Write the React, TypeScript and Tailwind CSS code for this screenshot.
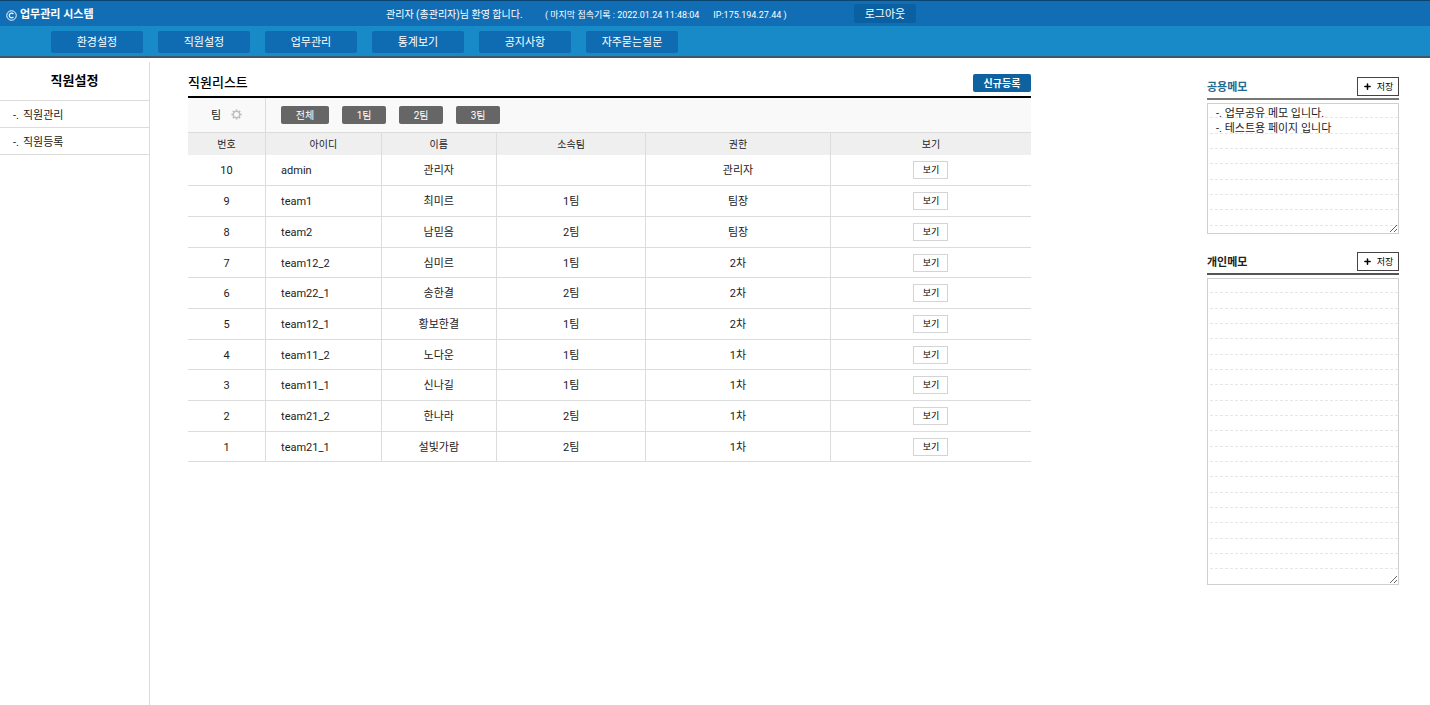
import { Plus } from "lucide-react";
import { useState } from "react";

const MENU = ["환경설정", "직원설정", "업무관리", "통계보기", "공지사항", "자주묻는질문"];
const SIDE_MENU = ["직원관리", "직원등록"];
const TEAMS = ["1팀", "2팀", "3팀"];

interface Staff {
  no: number;
  id: string;
  name: string;
  team: string;
  role: string;
}

const STAFF: Staff[] = [
  { no: 10, id: "admin", name: "관리자", team: "", role: "관리자" },
  { no: 9, id: "team1", name: "최미르", team: "1팀", role: "팀장" },
  { no: 8, id: "team2", name: "남믿음", team: "2팀", role: "팀장" },
  { no: 7, id: "team12_2", name: "심미르", team: "1팀", role: "2차" },
  { no: 6, id: "team22_1", name: "송한결", team: "2팀", role: "2차" },
  { no: 5, id: "team12_1", name: "황보한결", team: "1팀", role: "2차" },
  { no: 4, id: "team11_2", name: "노다운", team: "1팀", role: "1차" },
  { no: 3, id: "team11_1", name: "신나길", team: "1팀", role: "1차" },
  { no: 2, id: "team21_2", name: "한나라", team: "2팀", role: "1차" },
  { no: 1, id: "team21_1", name: "설빛가람", team: "2팀", role: "1차" },
];

function CopyrightIcon() {
  return (
    <svg viewBox="0 0 22 22" className="size-[11px]" fill="none" stroke="currentColor" strokeWidth="2">
      <circle cx="11" cy="11" r="9.5" />
      <path d="M14.8 8.2A4.6 4.6 0 1 0 14.8 13.8" strokeWidth="2.4" />
    </svg>
  );
}

function GearIcon() {
  return (
    <svg viewBox="0 0 24 24" className="size-[11px] text-[#bdbdbd]" fill="none" stroke="currentColor">
      <circle cx="12" cy="12" r="6.8" strokeWidth="2.6" />
      <path
        d="M12 1v4M12 19v4M1 12h4M19 12h4M4.2 4.2l2.9 2.9M16.9 16.9l2.9 2.9M4.2 19.8l2.9-2.9M16.9 7.1l2.9-2.9"
        strokeWidth="4"
      />
    </svg>
  );
}

function Header() {
  return (
    <header className="border-b-2 border-[#3c566b] text-white">
      <div className="flex h-[26px] items-center border-t border-[#0a4471] bg-[#116db4]">
        <h1 className="ml-[6px] flex w-[380px] shrink-0 items-center gap-[3px] pt-[3px] text-[11px] font-bold">
          <CopyrightIcon />
          업무관리 시스템
        </h1>
        <p className="w-[159px] shrink-0 pt-[2px] text-[10px]">관리자 (총관리자)님 환영 합니다.</p>
        <p className="flex w-[309px] shrink-0 gap-[14px] pt-[2px] text-[9px] whitespace-nowrap">
          <span>( 마지막 접속기록 : 2022.01.24 11:48:04</span>
          <span>IP:175.194.27.44 )</span>
        </p>
        <button className="h-[19px] w-[62px] rounded-xs bg-[#0b60a2] pt-[2px] text-[11px]">로그아웃</button>
      </div>
      <nav className="flex h-[30px] items-end gap-[15px] bg-[#188ac8] pb-[3px] pl-[51px]">
        {MENU.map((m) => (
          <a
            key={m}
            href="#"
            className="flex h-[22px] w-[92px] items-center justify-center rounded-xs bg-[#0f6cb3] pt-[2px] text-[11px]"
          >
            {m}
          </a>
        ))}
      </nav>
    </header>
  );
}

function Sidebar() {
  return (
    <aside className="mt-1 w-[150px] shrink-0 border-r border-[#dcdcdc]">
      <h2 className="flex h-[39px] items-center justify-center border-b border-[#dcdcdc] text-[13px] font-bold text-black">
        직원설정
      </h2>
      <ul>
        {SIDE_MENU.map((m) => (
          <li key={m} className="border-b border-[#dcdcdc]">
            <a href="#" className="flex h-[26px] items-center gap-1 pt-[3px] pl-[13px]">
              <span>-.</span>
              <span>{m}</span>
            </a>
          </li>
        ))}
      </ul>
    </aside>
  );
}

function StaffList() {
  const filterButton = "h-[18px] rounded-xs bg-[#666] pt-[2px] text-[10px] text-white";
  return (
    <main className="mr-[176px] ml-[38px] min-w-0 flex-1 pt-4">
      <div className="flex h-[22px] items-start justify-between">
        <h2 className="text-[13px] leading-[18px] font-medium text-black">직원리스트</h2>
        <button className="h-[18px] w-[58px] rounded-xs bg-[#0d629f] pt-[2px] text-[10px] font-bold text-white">
          신규등록
        </button>
      </div>
      <table className="w-full table-fixed border-collapse border-t-2 border-black text-center">
        <colgroup>
          <col className="w-[9.2%]" />
          <col className="w-[13.7%]" />
          <col className="w-[13.7%]" />
          <col className="w-[17.7%]" />
          <col className="w-[21.9%]" />
          <col />
        </colgroup>
        <thead>
          <tr className="h-[35px] border-b border-[#dcdcdc] bg-[#f9f9f9]">
            <th className="border-r border-[#dcdcdc] font-normal">
              <div className="flex items-center justify-center gap-[10px]">
                <span className="pt-[2px]">팀</span>
                <button aria-label="팀 설정">
                  <GearIcon />
                </button>
              </div>
            </th>
            <td colSpan={5} className="pl-[15px]">
              <div className="flex gap-[13px]">
                <button className={`${filterButton} w-12`}>전체</button>
                {TEAMS.map((t) => (
                  <button key={t} className={`${filterButton} w-11`}>
                    {t}
                  </button>
                ))}
              </div>
            </td>
          </tr>
          <tr className="h-[23px] bg-[#efefef] text-[10px] *:border-r *:border-[#dcdcdc] *:pt-[2px] *:font-normal *:last:border-r-0">
            <th>번호</th>
            <th>아이디</th>
            <th>이름</th>
            <th>소속팀</th>
            <th>권한</th>
            <th>보기</th>
          </tr>
        </thead>
        <tbody>
          {STAFF.map((s) => (
            <tr
              key={s.no}
              className="h-[31px] border-b border-[#dcdcdc] *:border-r *:border-[#dcdcdc] *:pt-[3px] *:last:border-r-0 *:last:pt-px nth-[3n+1]:h-[30px]"
            >
              <td>{s.no}</td>
              <td className="pl-[15px] text-left">{s.id}</td>
              <td>{s.name}</td>
              <td>{s.team}</td>
              <td>{s.role}</td>
              <td>
                <button className="mx-auto flex h-[18px] w-[35px] items-center justify-center border border-[#d4d4d4] text-[9px] text-black">
                  보기
                </button>
              </td>
            </tr>
          ))}
        </tbody>
      </table>
    </main>
  );
}

interface MemoProps {
  id: string;
  title: string;
  titleClass: string;
  lineClass: string;
  heightClass: string;
  initial: string;
}

function Memo({ id, title, titleClass, lineClass, heightClass, initial }: MemoProps) {
  const [text, setText] = useState(initial);
  return (
    <section>
      <div className={`mb-[3px] flex items-center justify-between border-b-2 pb-[2px] ${lineClass}`}>
        <label htmlFor={id} className={`pt-[3px] text-[11px] font-bold ${titleClass}`}>
          {title}
        </label>
        <button className="flex h-[19px] w-[42px] items-center justify-center gap-[5px] border border-[#444] text-[9px] text-black">
          <Plus className="size-[9px]" strokeWidth={4} />
          저장
        </button>
      </div>
      {/* ruled paper: a 46px tile holds three dashed lines */}
      <textarea
        id={id}
        value={text}
        onChange={(e) => setText(e.target.value)}
        className={`block w-full border border-[#d0d0d0] bg-[repeating-linear-gradient(90deg,#fff_0_2px,transparent_2px_5px),linear-gradient(#fff_13px,#e6e6e6_13px_14px,#fff_14px_29px,#e6e6e6_29px_30px,#fff_30px_44px,#e6e6e6_44px_45px,#fff_45px)] bg-size-[100%_46px] px-2 py-[2px] leading-[15px] outline-none ${heightClass}`}
      />
    </section>
  );
}

export default function App() {
  return (
    <div className="flex min-h-screen flex-col bg-white font-['Roboto','Noto_Sans_CJK_KR',sans-serif] text-[11px] leading-4 text-[#222]">
      <Header />
      <div className="flex flex-1">
        <Sidebar />
        <StaffList />
        <aside className="mr-[31px] flex w-48 shrink-0 flex-col gap-[18px] pt-[19px]">
          <Memo
            id="shared-memo"
            title="공용메모"
            titleClass="text-[#25698f]"
            lineClass="border-[#777]"
            heightClass="h-[131px]"
            initial={"-. 업무공유 메모 입니다.\n-. 테스트용 페이지 입니다"}
          />
          <Memo
            id="private-memo"
            title="개인메모"
            titleClass="text-[#222]"
            lineClass="border-[#555]"
            heightClass="h-[307px]"
            initial=""
          />
        </aside>
      </div>
    </div>
  );
}
